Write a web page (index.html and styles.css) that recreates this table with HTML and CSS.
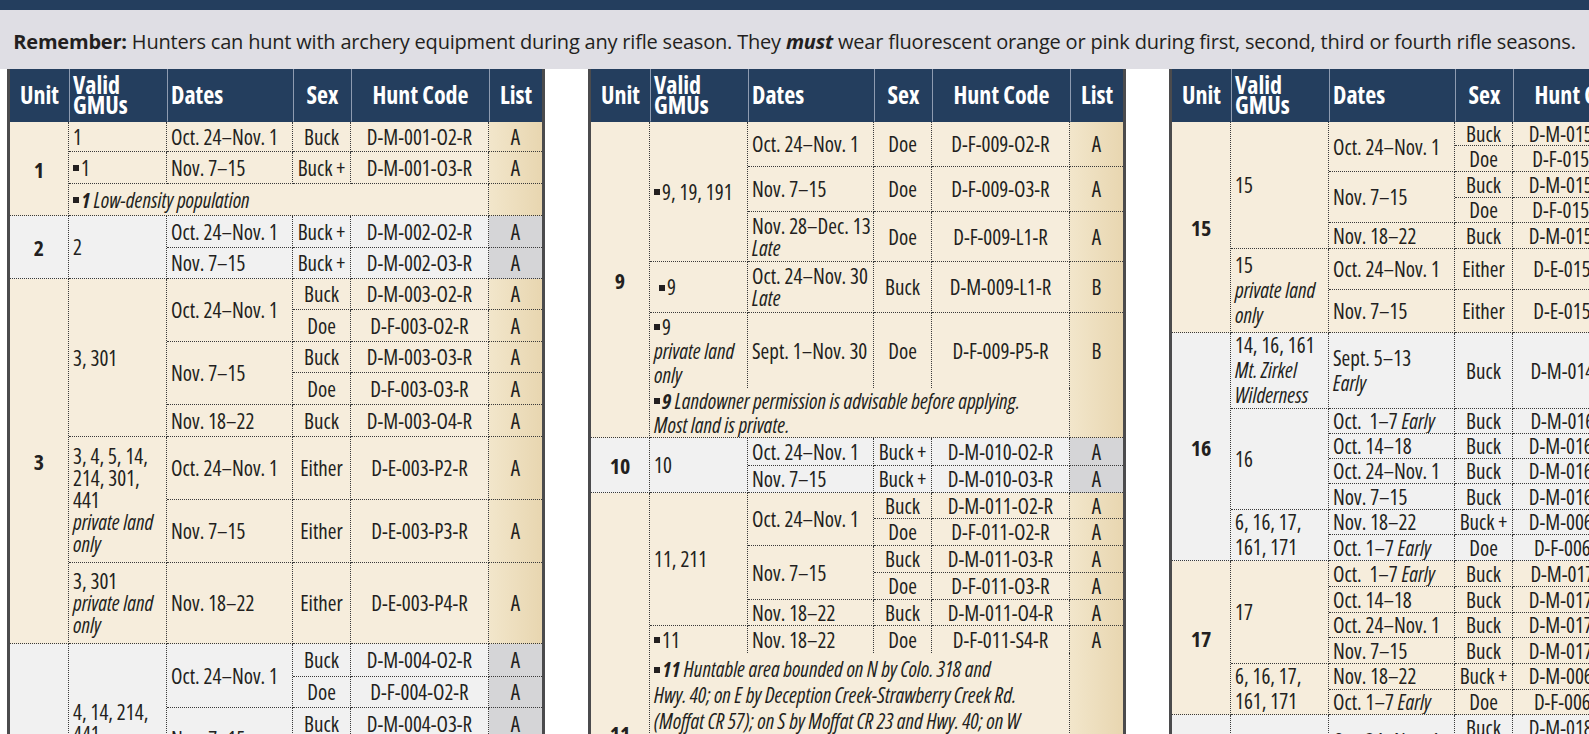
FILE: index.html
```html
<!DOCTYPE html>
<html lang="en">
<head>
<meta charset="utf-8">
<title>Deer rifle hunt codes</title>
<link rel="stylesheet" href="styles.css">
</head>
<body>
<div class="topbar"></div>
<div class="banner"><span><b>Remember:</b> Hunters can hunt with archery equipment during any rifle season. They <b><i>must</i></b> wear fluorescent orange or pink during first, second, third or fourth rifle seasons.</span></div>
<div class="tables">

<div class="panel">
<table>
<colgroup><col class="c-unit"><col class="c-valid"><col class="c-dates"><col class="c-sex"><col class="c-hunt"><col class="c-list"></colgroup>
<thead><tr><th class="hu">Unit</th><th class="hv">Valid<br>GMUs</th><th class="hd">Dates</th><th class="hs">Sex</th><th class="hh">Hunt Code</th><th class="hl">List</th></tr></thead>
<tbody class="cream">
<tr class="r30"><td class="u" rowspan="3">1</td><td class="v">1</td><td class="d">Oct. 24–Nov. 1</td><td class="s">Buck</td><td class="h">D-M-001-O2-R</td><td class="l">A</td></tr>
<tr class="r32"><td class="v"><span class="sq"></span>1</td><td class="d">Nov. 7–15</td><td class="s">Buck +</td><td class="h">D-M-001-O3-R</td><td class="l">A</td></tr>
<tr class="r32"><td class="n" colspan="4"><span class="sq"></span><b>1</b> Low-density population</td><td class="l"></td></tr>
</tbody>
<tbody class="gray">
<tr class="r32"><td class="u" rowspan="2">2</td><td class="v" rowspan="2">2</td><td class="d">Oct. 24–Nov. 1</td><td class="s">Buck +</td><td class="h">D-M-002-O2-R</td><td class="l">A</td></tr>
<tr class="r31"><td class="d">Nov. 7–15</td><td class="s">Buck +</td><td class="h">D-M-002-O3-R</td><td class="l">A</td></tr>
</tbody>
<tbody class="cream">
<tr class="r31"><td class="u" rowspan="8">3</td><td class="v" rowspan="5">3, 301</td><td class="d" rowspan="2">Oct. 24–Nov. 1</td><td class="s">Buck</td><td class="h">D-M-003-O2-R</td><td class="l">A</td></tr>
<tr class="r32"><td class="s">Doe</td><td class="h">D-F-003-O2-R</td><td class="l">A</td></tr>
<tr class="r31"><td class="d" rowspan="2">Nov. 7–15</td><td class="s">Buck</td><td class="h">D-M-003-O3-R</td><td class="l">A</td></tr>
<tr class="r32"><td class="s">Doe</td><td class="h">D-F-003-O3-R</td><td class="l">A</td></tr>
<tr class="r32"><td class="d">Nov. 18–22</td><td class="s">Buck</td><td class="h">D-M-003-O4-R</td><td class="l">A</td></tr>
<tr class="r63"><td class="v" rowspan="2">3, 4, 5, 14,<br>214, 301,<br>441<br><i>private land<br>only</i></td><td class="d">Oct. 24–Nov. 1</td><td class="s">Either</td><td class="h">D-E-003-P2-R</td><td class="l">A</td></tr>
<tr class="r63"><td class="d">Nov. 7–15</td><td class="s">Either</td><td class="h">D-E-003-P3-R</td><td class="l">A</td></tr>
<tr class="r81"><td class="v">3, 301<br><i>private land<br>only</i></td><td class="d">Nov. 18–22</td><td class="s">Either</td><td class="h">D-E-003-P4-R</td><td class="l">A</td></tr>
</tbody>
<tbody class="gray">
<tr class="r33"><td class="u" rowspan="8">4</td><td class="v" rowspan="5">4, 14, 214,<br>441</td><td class="d" rowspan="2">Oct. 24–Nov. 1</td><td class="s">Buck</td><td class="h">D-M-004-O2-R</td><td class="l">A</td></tr>
<tr class="r31"><td class="s">Doe</td><td class="h">D-F-004-O2-R</td><td class="l">A</td></tr>
<tr class="r32"><td class="d" rowspan="2">Nov. 7–15</td><td class="s">Buck</td><td class="h">D-M-004-O3-R</td><td class="l">A</td></tr>
<tr class="r31"><td class="s">Doe</td><td class="h">D-F-004-O3-R</td><td class="l">A</td></tr>
<tr class="r32"><td class="d">Nov. 18–22</td><td class="s">Buck</td><td class="h">D-M-004-O4-R</td><td class="l">A</td></tr>
<tr class="r63"><td class="v" rowspan="2">4, 14, 214,<br>441<br><i>private land<br>only</i></td><td class="d">Oct. 24–Nov. 1</td><td class="s">Either</td><td class="h">D-E-004-P2-R</td><td class="l">A</td></tr>
<tr class="r63"><td class="d">Nov. 7–15</td><td class="s">Either</td><td class="h">D-E-004-P3-R</td><td class="l">A</td></tr>
<tr class="r32"><td class="v">4, 441</td><td class="d">Nov. 18–22</td><td class="s">Either</td><td class="h">D-E-004-P4-R</td><td class="l">A</td></tr>
</tbody>
</table>
</div>

<div class="panel">
<table>
<colgroup><col class="c-unit"><col class="c-valid"><col class="c-dates"><col class="c-sex"><col class="c-hunt"><col class="c-list"></colgroup>
<thead><tr><th class="hu">Unit</th><th class="hv">Valid<br>GMUs</th><th class="hd">Dates</th><th class="hs">Sex</th><th class="hh">Hunt Code</th><th class="hl">List</th></tr></thead>
<tbody class="cream">
<tr class="r45"><td class="u" rowspan="6">9</td><td class="v" rowspan="3"><span class="sq"></span>9, 19, 191</td><td class="d">Oct. 24–Nov. 1</td><td class="s">Doe</td><td class="h">D-F-009-O2-R</td><td class="l">A</td></tr>
<tr class="r45"><td class="d">Nov. 7–15</td><td class="s">Doe</td><td class="h">D-F-009-O3-R</td><td class="l">A</td></tr>
<tr class="r50"><td class="d">Nov. 28–Dec. 13<br><i>Late</i></td><td class="s">Doe</td><td class="h">D-F-009-L1-R</td><td class="l">A</td></tr>
<tr class="r51"><td class="v vi"><span class="sq"></span>9</td><td class="d">Oct. 24–Nov. 30<br><i>Late</i></td><td class="s">Buck</td><td class="h">D-M-009-L1-R</td><td class="l">B</td></tr>
<tr class="r75 nb"><td class="v lh24"><span class="sq"></span>9<br><i>private land<br>only</i></td><td class="d">Sept. 1–Nov. 30</td><td class="s">Doe</td><td class="h">D-F-009-P5-R</td><td class="l">B</td></tr>
<tr class="r50"><td class="n lh24" colspan="4"><span class="sq"></span><b>9</b> Landowner permission is advisable before applying.<br>Most land is private.</td><td class="l"></td></tr>
</tbody>
<tbody class="gray">
<tr class="r28"><td class="u" rowspan="2">10</td><td class="v" rowspan="2">10</td><td class="d">Oct. 24–Nov. 1</td><td class="s">Buck +</td><td class="h">D-M-010-O2-R</td><td class="l">A</td></tr>
<tr class="r27"><td class="d">Nov. 7–15</td><td class="s">Buck +</td><td class="h">D-M-010-O3-R</td><td class="l">A</td></tr>
</tbody>
<tbody class="cream">
<tr class="r26"><td class="u u11" rowspan="7">11</td><td class="v" rowspan="5">11, 211</td><td class="d" rowspan="2">Oct. 24–Nov. 1</td><td class="s">Buck</td><td class="h">D-M-011-O2-R</td><td class="l">A</td></tr>
<tr class="r27"><td class="s">Doe</td><td class="h">D-F-011-O2-R</td><td class="l">A</td></tr>
<tr class="r27"><td class="d" rowspan="2">Nov. 7–15</td><td class="s">Buck</td><td class="h">D-M-011-O3-R</td><td class="l">A</td></tr>
<tr class="r27"><td class="s">Doe</td><td class="h">D-F-011-O3-R</td><td class="l">A</td></tr>
<tr class="r26"><td class="d">Nov. 18–22</td><td class="s">Buck</td><td class="h">D-M-011-O4-R</td><td class="l">A</td></tr>
<tr class="r27 nb"><td class="v"><span class="sq"></span>11</td><td class="d">Nov. 18–22</td><td class="s">Doe</td><td class="h">D-F-011-S4-R</td><td class="l">A</td></tr>
<tr><td class="n n11" colspan="4"><span class="sq"></span><b>11</b> Huntable area bounded on N by Colo. 318 and<br>Hwy. 40; on E by Deception Creek-Strawberry Creek Rd.<br>(Moffat CR 57); on S by Moffat CR 23 and Hwy. 40; on W<br>by Twelvemile Gulch Rd., Moffat CR 25, Yampa River and<br>Colo. 318. Landowner permission is advisable.</td><td class="l"></td></tr>
</tbody>
</table>
</div>

<div class="panel">
<table>
<colgroup><col class="c-unit"><col class="c-valid"><col class="c-dates"><col class="c-sex"><col class="c-hunt"><col class="c-list"></colgroup>
<thead><tr><th class="hu">Unit</th><th class="hv">Valid<br>GMUs</th><th class="hd">Dates</th><th class="hs">Sex</th><th class="hh">Hunt Code</th><th class="hl">List</th></tr></thead>
<tbody class="cream">
<tr class="r24"><td class="u" rowspan="7">15</td><td class="v" rowspan="5">15</td><td class="d" rowspan="2">Oct. 24–Nov. 1</td><td class="s">Buck</td><td class="h">D-M-015-O2-R</td><td class="l">A</td></tr>
<tr class="r26"><td class="s">Doe</td><td class="h">D-F-015-O2-R</td><td class="l">A</td></tr>
<tr class="r26"><td class="d" rowspan="2">Nov. 7–15</td><td class="s">Buck</td><td class="h">D-M-015-O3-R</td><td class="l">A</td></tr>
<tr class="r25"><td class="s">Doe</td><td class="h">D-F-015-O3-R</td><td class="l">A</td></tr>
<tr class="r26"><td class="d">Nov. 18–22</td><td class="s">Buck</td><td class="h">D-M-015-O4-R</td><td class="l">A</td></tr>
<tr class="r41"><td class="v lh25" rowspan="2">15<br><i>private land<br>only</i></td><td class="d">Oct. 24–Nov. 1</td><td class="s">Either</td><td class="h">D-E-015-P2-R</td><td class="l">A</td></tr>
<tr class="r43"><td class="d">Nov. 7–15</td><td class="s">Either</td><td class="h">D-E-015-P3-R</td><td class="l">A</td></tr>
</tbody>
<tbody class="gray">
<tr class="r74"><td class="u" rowspan="7">16</td><td class="v lh25">14, 16, 161<br><i>Mt. Zirkel<br>Wilderness</i></td><td class="d lh25">Sept. 5–13<br><i>Early</i></td><td class="s">Buck</td><td class="h">D-M-014-E1-R</td><td class="l">A</td></tr>
<tr class="r25"><td class="v" rowspan="4">16</td><td class="d">Oct.&nbsp; 1–7 <i>Early</i></td><td class="s">Buck</td><td class="h">D-M-016-E1-R</td><td class="l">A</td></tr>
<tr class="r25"><td class="d">Oct. 14–18</td><td class="s">Buck</td><td class="h">D-M-016-O1-R</td><td class="l">A</td></tr>
<tr class="r25"><td class="d">Oct. 24–Nov. 1</td><td class="s">Buck</td><td class="h">D-M-016-O2-R</td><td class="l">A</td></tr>
<tr class="r26"><td class="d">Nov. 7–15</td><td class="s">Buck</td><td class="h">D-M-016-O3-R</td><td class="l">A</td></tr>
<tr class="r25"><td class="v lh25" rowspan="2">6, 16, 17,<br>161, 171</td><td class="d">Nov. 18–22</td><td class="s">Buck +</td><td class="h">D-M-006-O4-R</td><td class="l">A</td></tr>
<tr class="r26"><td class="d">Oct. 1–7 <i>Early</i></td><td class="s">Doe</td><td class="h">D-F-006-E1-R</td><td class="l">A</td></tr>
</tbody>
<tbody class="cream">
<tr class="r26"><td class="u" rowspan="6">17</td><td class="v" rowspan="4">17</td><td class="d">Oct.&nbsp; 1–7 <i>Early</i></td><td class="s">Buck</td><td class="h">D-M-017-E1-R</td><td class="l">A</td></tr>
<tr class="r26"><td class="d">Oct. 14–18</td><td class="s">Buck</td><td class="h">D-M-017-O1-R</td><td class="l">A</td></tr>
<tr class="r25"><td class="d">Oct. 24–Nov. 1</td><td class="s">Buck</td><td class="h">D-M-017-O2-R</td><td class="l">A</td></tr>
<tr class="r26"><td class="d">Nov. 7–15</td><td class="s">Buck</td><td class="h">D-M-017-O3-R</td><td class="l">A</td></tr>
<tr class="r25"><td class="v lh25" rowspan="2">6, 16, 17,<br>161, 171</td><td class="d">Nov. 18–22</td><td class="s">Buck +</td><td class="h">D-M-006-O4-R</td><td class="l">A</td></tr>
<tr class="r25"><td class="d">Oct. 1–7 <i>Early</i></td><td class="s">Doe</td><td class="h">D-F-006-E1-R</td><td class="l">A</td></tr>
</tbody>
<tbody class="gray">
<tr class="r26"><td class="u" rowspan="5">18</td><td class="v" rowspan="5">18, 28, 37,<br>181, 371</td><td class="d" rowspan="2">Oct. 24–Nov. 1</td><td class="s">Buck</td><td class="h">D-M-018-O2-R</td><td class="l">A</td></tr>
<tr class="r26"><td class="s">Doe</td><td class="h">D-F-018-O2-R</td><td class="l">A</td></tr>
<tr class="r26"><td class="d" rowspan="2">Nov. 7–15</td><td class="s">Buck</td><td class="h">D-M-018-O3-R</td><td class="l">A</td></tr>
<tr class="r26"><td class="s">Doe</td><td class="h">D-F-018-O3-R</td><td class="l">A</td></tr>
<tr class="r26"><td class="d">Nov. 18–22</td><td class="s">Buck</td><td class="h">D-M-018-O4-R</td><td class="l">A</td></tr>
</tbody>
</table>
</div>

</div>
</body>
</html>
```
FILE: styles.css
```css
* { box-sizing: border-box; }
html, body { margin: 0; padding: 0; background: #ffffff; }
body {
  width: 1589px;
  height: 734px;
  overflow: hidden;
  font-family: "Open Sans", "Liberation Sans", sans-serif;
  font-stretch: 84%;
  color: #231f20;
}
.topbar { height: 10px; background: #243e5e; }
.banner {
  height: 59px;
  background: #dfdee4;
  display: flex;
  align-items: center;
  justify-content: center;
  padding-top: 4px;
  font-size: 20px;
  font-stretch: 100%;
  letter-spacing: -0.2px;
  white-space: nowrap;
}
.banner b { font-weight: 700; }
.tables {
  display: flex;
  align-items: flex-start;
  gap: 43px;
  padding-left: 7px;
}
.panel {
  flex: none;
  width: 538px;
  border-left: 3px solid #4b4b4d;
  border-right: 3px solid #4b4b4d;
}
table {
  width: 532px;
  table-layout: fixed;
  border-collapse: separate;
  border-spacing: 0;
  font-size: 21px;
  line-height: 22px;
}
col.c-unit { width: 59px; }
col.c-valid { width: 98px; }
col.c-dates { width: 126px; }
col.c-sex { width: 58px; }
col.c-hunt { width: 138px; }
col.c-list { width: 53px; }

thead th {
  height: 53px;
  padding: 0;
  background: #243e5e;
  color: #ffffff;
  font-size: 24px;
  font-weight: 700;
  font-stretch: 75%;
  line-height: 20px;
  text-align: center;
  vertical-align: middle;
  border-left: 1px solid #8e9bb0;
  border-bottom: 1px solid #243e5e;
  white-space: nowrap;
}
thead th.hu { border-left: none; }
thead th.hv, thead th.hd { text-align: left; padding-left: 3px; }

tbody td {
  padding: 0 4px;
  border-right: 1px dotted #3a3a3a;
  border-bottom: 1px dotted #3a3a3a;
  white-space: nowrap;
  vertical-align: middle;
  overflow: hidden;
}
tbody tr.nb td { border-bottom: none; }
tbody tr.nb td.u { border-bottom: 1px dotted #3a3a3a; }

.cream td { background: #f6eddc; }
.cream td.l { background: linear-gradient(90deg, #f2e6cb 0%, #e8d6b0 100%); }
.gray td { background: #f1f1f1; }
.gray td.l { background: #d5d5d7; }

td.u { text-align: center; font-weight: 700; font-size: 22px; }
td.u11 { vertical-align: top; padding-top: 229px; }
td.v { text-align: left; }
td.vi { padding-left: 9px; }
td.d { text-align: left; }
td.s { text-align: center; padding: 0; }
td.h { text-align: center; padding: 0; }
td.l { text-align: center; border-right: none; padding: 0; }
td.n { font-style: italic; text-align: left; }
td.n b { font-weight: 700; }
td.n11 { vertical-align: top; padding-top: 3px; line-height: 26px; }
.lh24 { line-height: 24px; }
.lh25 { line-height: 25px; }

.sq {
  display: inline-block;
  width: 6px;
  height: 6px;
  margin: 0 2px 3px 0;
  background: #231f20;
  vertical-align: middle;
}

tr.r24 { height: 24px; }
tr.r25 { height: 25px; }
tr.r26 { height: 26px; }
tr.r27 { height: 27px; }
tr.r28 { height: 28px; }
tr.r30 { height: 30px; }
tr.r31 { height: 31px; }
tr.r32 { height: 32px; }
tr.r33 { height: 33px; }
tr.r41 { height: 41px; }
tr.r43 { height: 43px; }
tr.r45 { height: 45px; }
tr.r50 { height: 50px; }
tr.r51 { height: 51px; }
tr.r63 { height: 63px; }
tr.r74 { height: 74px; }
tr.r75 { height: 75px; }
tr.r81 { height: 81px; }
```
